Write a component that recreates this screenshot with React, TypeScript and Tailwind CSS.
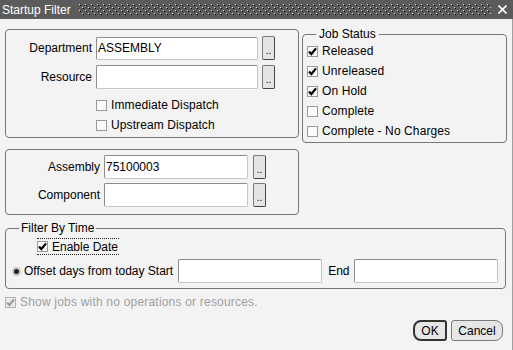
import React from "react";

function Check({ checked, disabled }: { checked?: boolean; disabled?: boolean }) {
  return (
    <span
      className={`w-[11px] h-[11px] shrink-0 border flex items-center justify-center ${
        disabled ? "border-[#b4b4b4] bg-[#ececec]" : "border-[#9a9a9a] bg-[#fbfbfb]"
      }`}
    >
      {checked && (
        <svg width="9" height="9" viewBox="0 0 9 9">
          <path
            d="M1 4.6 L3.4 7 L8 1.4"
            stroke={disabled ? "#9c9c9c" : "#000"}
            strokeWidth="2.2"
            fill="none"
          />
        </svg>
      )}
    </span>
  );
}

function Input({ value, w, h = 23 }: { value?: string; w: string; h?: number }) {
  return (
    <div
      className={`${w} ${h === 24 ? "h-[24px]" : "h-[23px]"} bg-white border border-[#8c8c8c] border-r-[#c4c4c4] border-b-[#c4c4c4] rounded-[2px] flex items-center pl-[1px] text-black`}
    >
      {value}
    </div>
  );
}

function Dots() {
  return (
    <div className="w-[13px] h-[24px] shrink-0 bg-[#e4e4e4] border border-[#7a7a7a] border-r-[#444] border-b-[#444] rounded-[2px] flex items-end justify-center pb-[3px] text-[10px] leading-none">
      ..
    </div>
  );
}

function CheckRow({ label, checked }: { label: string; checked?: boolean }) {
  return (
    <div className="h-[20px] flex items-center">
      <Check checked={checked} />
      <span className="ml-[4px] tracking-[0.1px]">{label}</span>
    </div>
  );
}

export default function App() {
  return (
    <div className="w-[513px] h-[350px] bg-[#f3f3f3] text-[12px] text-black font-['Liberation_Sans',Arial,sans-serif] overflow-hidden flex flex-col">
      {/* Title bar */}
      <div className="h-[19px] shrink-0 bg-[#5b5b5b] flex items-center text-white">
        <span className="ml-[2px] text-[12px] leading-none">Startup Filter</span>
        <svg className="ml-[8px] flex-1 h-[13px]" height="13">
          <defs>
            <pattern id="dotpat" width="6" height="6" patternUnits="userSpaceOnUse">
              <rect x="0" y="1" width="1" height="1" fill="#e0e0e0" />
              <rect x="1" y="2" width="1" height="1" fill="#000" />
              <rect x="3" y="4" width="1" height="1" fill="#e0e0e0" />
              <rect x="4" y="5" width="1" height="1" fill="#000" />
            </pattern>
          </defs>
          <rect width="100%" height="100%" fill="url(#dotpat)" />
        </svg>
        <svg className="ml-[7px] mr-[6px]" width="9" height="9" viewBox="0 0 9 9">
          <path d="M0.5 0.5 L8.5 8.5 M8.5 0.5 L0.5 8.5" stroke="#fff" strokeWidth="1.6" />
        </svg>
      </div>

      {/* Body */}
      <div className="flex-1 flex flex-col border-r border-[#a0a0a0]">
        <div className="flex items-start">
          {/* Left column */}
          <div className="ml-[5px] mt-[10px] w-[294px] flex flex-col">
            <div className="h-[109px] border border-[#767676] rounded-[4px] pt-[6px]">
              <div className="flex items-center">
                <span className="w-[86px] text-right">Department</span>
                <div className="ml-[4px]">
                  <Input value="ASSEMBLY" w="w-[162px]" />
                </div>
                <div className="ml-[4px]">
                  <Dots />
                </div>
              </div>
              <div className="flex items-center mt-[5px]">
                <span className="w-[86px] text-right">Resource</span>
                <div className="ml-[4px]">
                  <Input w="w-[162px]" h={24} />
                </div>
                <div className="ml-[4px]">
                  <Dots />
                </div>
              </div>
              <div className="ml-[90px] mt-[6px]">
                <CheckRow label="Immediate Dispatch" />
                <CheckRow label="Upstream Dispatch" />
              </div>
            </div>

            <div className="mt-[11px] h-[66px] border border-[#767676] rounded-[4px] pt-[5px]">
              <div className="flex items-center">
                <span className="w-[94px] text-right">Assembly</span>
                <div className="ml-[4px]">
                  <Input value="75100003" w="w-[144px]" h={24} />
                </div>
                <div className="ml-[5px]">
                  <Dots />
                </div>
              </div>
              <div className="flex items-center mt-[4px]">
                <span className="w-[94px] text-right">Component</span>
                <div className="ml-[4px]">
                  <Input w="w-[144px]" h={24} />
                </div>
                <div className="ml-[5px]">
                  <Dots />
                </div>
              </div>
            </div>
          </div>

          {/* Job Status */}
          <div className="relative ml-[3px] mt-[15px] w-[205px] h-[109px] border border-[#767676] rounded-[4px] pt-[6px] pl-[4px]">
            <span className="absolute left-[13px] -top-[8px] px-[3px] bg-[#f3f3f3] leading-[14px]">
              Job Status
            </span>
            <CheckRow label="Released" checked />
            <CheckRow label="Unreleased" checked />
            <CheckRow label="On Hold" checked />
            <CheckRow label="Complete" />
            <CheckRow label="Complete - No Charges" />
          </div>
        </div>

        {/* Filter By Time */}
        <div className="relative ml-[5px] mt-[13px] w-[501px] h-[61px] border border-[#767676] rounded-[4px] pt-[9px]">
          <span className="absolute left-[13px] -top-[8px] px-[2px] bg-[#f3f3f3] leading-[14px]">
            Filter By Time
          </span>
          <div className="ml-[31px] inline-flex h-[17px] items-center border-y border-dotted border-[#222] pr-[1px]">
            <Check checked />
            <span className="ml-[4px]">Enable Date</span>
          </div>
          <div className="mt-[3px] h-[24px] flex items-center">
            <span className="ml-[6px] w-[9px] h-[9px] rounded-full bg-[#222] border-[2px] border-[#c8c8c8] box-border" />
            <span className="ml-[3px]">Offset days from today Start</span>
            <div className="ml-[5px]">
              <Input w="w-[144px]" h={24} />
            </div>
            <span className="ml-[6px]">End</span>
            <div className="ml-[4px]">
              <Input w="w-[144px]" h={24} />
            </div>
          </div>
        </div>

        {/* Show jobs */}
        <div className="ml-[5px] mt-[5px] h-[16px] flex items-center text-[#a0a0a0]">
          <Check checked disabled />
          <span className="ml-[4px] tracking-[0.2px]">Show jobs with no operations or resources.</span>
        </div>

        {/* Buttons */}
        <div className="mt-[10px] flex justify-end pr-[9px]">
          <div className="w-[34px] h-[21px] border-[2px] border-[#333] rounded-l-[8px] rounded-r-[3px] bg-[#e6e6e6] flex items-center justify-center">
            OK
          </div>
          <div className="ml-[4px] w-[52px] h-[21px] border border-[#7a7a7a] rounded-l-[3px] rounded-r-[8px] bg-[#e6e6e6] flex items-center justify-center">
            Cancel
          </div>
        </div>
      </div>
    </div>
  );
}
